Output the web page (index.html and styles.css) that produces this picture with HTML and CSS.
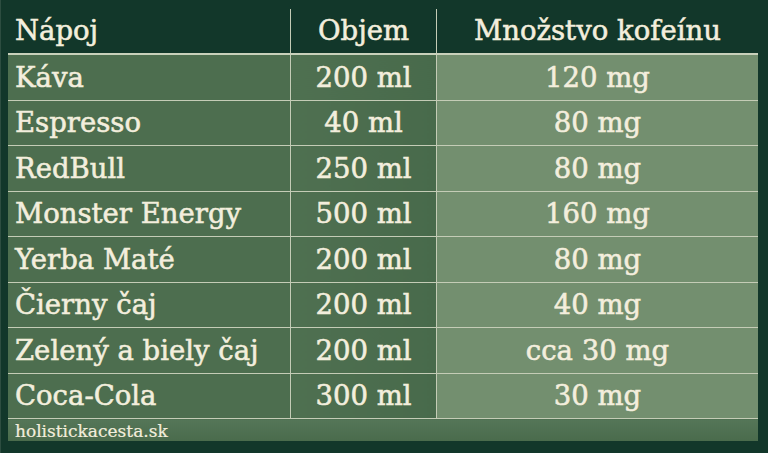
FILE: index.html
```html
<!DOCTYPE html>
<html lang="sk">
<head>
<meta charset="utf-8">
<title>Kofeín v nápojoch</title>
<link rel="stylesheet" href="styles.css">
</head>
<body>
<div class="frame">
  <table class="caffeine">
    <thead>
      <tr><th class="c1">Nápoj</th><th class="c2">Objem</th><th class="c3">Množstvo kofeínu</th></tr>
    </thead>
    <tbody>
      <tr><td class="c1">Káva</td><td class="c2">200 ml</td><td class="c3">120 mg</td></tr>
      <tr><td class="c1">Espresso</td><td class="c2">40 ml</td><td class="c3">80 mg</td></tr>
      <tr><td class="c1">RedBull</td><td class="c2">250 ml</td><td class="c3">80 mg</td></tr>
      <tr><td class="c1">Monster Energy</td><td class="c2">500 ml</td><td class="c3">160 mg</td></tr>
      <tr><td class="c1">Yerba Maté</td><td class="c2">200 ml</td><td class="c3">80 mg</td></tr>
      <tr><td class="c1">Čierny čaj</td><td class="c2">200 ml</td><td class="c3">40 mg</td></tr>
      <tr><td class="c1">Zelený a biely čaj</td><td class="c2">200 ml</td><td class="c3">cca 30 mg</td></tr>
      <tr><td class="c1">Coca-Cola</td><td class="c2">300 ml</td><td class="c3">30 mg</td></tr>
    </tbody>
    <tfoot>
      <tr><td class="foot" colspan="3">holistickacesta.sk</td></tr>
    </tfoot>
  </table>
</div>
</body>
</html>
```

FILE: styles.css
```css
html, body {
  margin: 0;
  padding: 0;
  background: #12372a;
}
.frame {
  width: 768px;
  height: 453px;
  box-sizing: border-box;
  padding: 9px 10px 12px 8px;
  background: #12372a;
  box-shadow: inset 1px 0 0 #2d4d40;
}
.caffeine {
  width: 750px;
  border-collapse: collapse;
  table-layout: fixed;
  font-family: "DejaVu Serif", "Liberation Serif", serif;
  color: #f3eedd;
}
.caffeine th,
.caffeine td {
  padding: 0;
  font-weight: normal;
  font-size: 27.5px;
  line-height: 1;
  white-space: nowrap;
  -webkit-text-stroke: 0.55px #f3eedd;
}
.caffeine th {
  height: 44px;
  background: #12372a;
  border-bottom: 2px solid #c9d1bb;
}
.caffeine tbody td {
  height: 44.5px;
  border-bottom: 1.5px solid #c4ccb6;
}
.c1 {
  width: 275px;
  text-align: left;
  padding-left: 7px !important;
  border-right: 1px solid #c4ccb6;
}
.c2 {
  width: 145px;
  text-align: center;
  border-right: 1px solid #c4ccb6;
}
.c3 {
  text-align: center;
}
tbody .c1 {
  background: #4d6e4f;
}
tbody .c2 {
  background: linear-gradient(90deg, #4f7051, #486a4b);
}
tbody .c3 {
  background: #738f6f;
}
.caffeine .foot {
  height: 19px;
  padding-top: 3px;
  font-size: 17px;
  padding-left: 7px;
  text-align: left;
  background: linear-gradient(180deg, #557658, #4a6b4c);
  border: none;
  -webkit-text-stroke: 0.2px #f3eedd;
}
```
